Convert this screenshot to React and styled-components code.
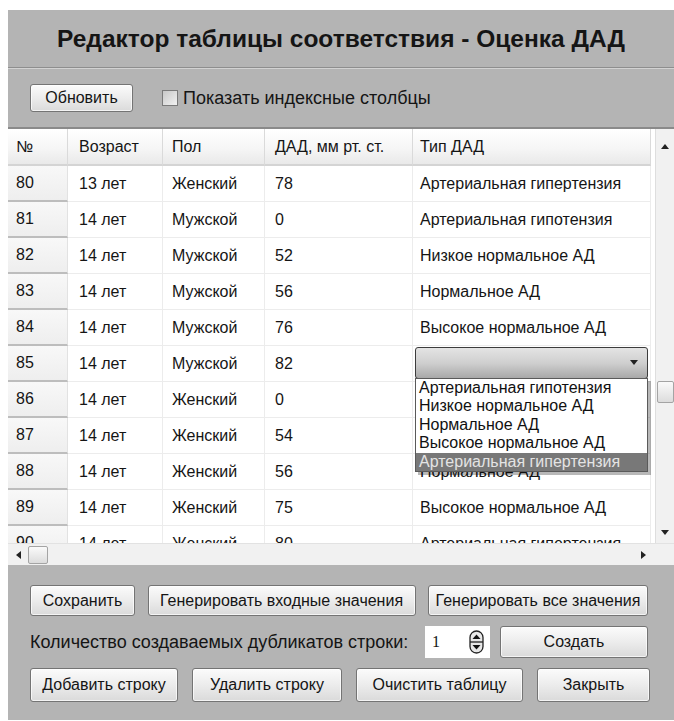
import React from "react";
import styled, { createGlobalStyle } from "styled-components";

const GlobalStyle = createGlobalStyle`
  body {
    margin: 0;
    background: #fff;
    font-family: "Liberation Sans", Arial, sans-serif;
    color: #151515;
  }
`;

const Window = styled.div`
  margin: 10px 0 0 8px;
  width: 666px;
  background: #b4b4b4;
`;

const TitleBar = styled.h1`
  margin: 0;
  height: 57px;
  display: flex;
  align-items: center;
  justify-content: center;
  font-size: 24.5px;
  font-weight: bold;
  border-bottom: 1px solid #8e8e8e;
  box-shadow: 0 1px 0 #d2d2d2;
`;

const Toolbar = styled.div`
  height: 58px;
  display: flex;
  align-items: center;
  padding-left: 22px;
  gap: 29px;
  border-bottom: 2px solid #8a8a8a;
  margin-top: 1px;
`;

const Button = styled.button`
  width: ${(p) => p.$w}px;
  height: ${(p) => p.$h || 31}px;
  padding: 0;
  border: 1px solid #747474;
  border-radius: 3px;
  background: linear-gradient(#fbfbfb, #ececec 50%, #dadada);
  box-shadow: inset 0 0 0 1px rgba(255, 255, 255, 0.7);
  font-family: inherit;
  font-size: 16px;
  color: #151515;
`;

const CheckLabel = styled.label`
  display: flex;
  align-items: center;
  gap: 5px;
  font-size: 18px;
`;

const CheckBox = styled.span`
  width: 14px;
  height: 14px;
  border: 1px solid #7a7a7a;
  background: linear-gradient(135deg, #c8c8c8, #f2f2f2);
`;

const TableFrame = styled.div`
  display: grid;
  grid-template-columns: 647px 19px;
  grid-template-rows: 414px 22px;
  background: #fff;
`;

const Viewport = styled.div`
  overflow: hidden;
`;

const Grid = styled.div`
  display: grid;
  grid-template-columns: 60px 95px 102px 148px 238px;
  grid-template-rows: 37px;
  grid-auto-rows: 36px;
  font-size: 16px;
`;

const Cell = styled.div`
  position: relative;
  display: flex;
  align-items: center;
  padding-left: ${(p) => p.$pad ?? 9}px;
  border-right: 1px solid #ececec;
  border-bottom: 1px solid #ececec;
  white-space: nowrap;
`;

const HeadCell = styled(Cell)`
  background: linear-gradient(#ffffff, #f6f6f6 55%, #e9e9e9);
  border-right-color: #dadada;
  border-bottom: 2px solid #d4d4d4;
`;

const IndexCell = styled(Cell)`
  background: linear-gradient(#f8f8f8, #eeeeee);
  border-bottom: 2px solid #bdbdbd;
  border-right-color: #e2e2e2;
`;

const Combo = styled.div`
  position: relative;
  flex: 1;
  height: 30px;
  margin: -2px 2px 0 -5px;
  border: 1px solid #3c3c3c;
  border-radius: 3px;
  background: linear-gradient(#e4e4e4, #cfcfcf 50%, #a9a9a9);
  display: flex;
  align-items: center;
  justify-content: flex-end;
  padding-right: 9px;
`;

const Popup = styled.ul`
  position: absolute;
  top: 100%;
  left: -1px;
  right: -1px;
  z-index: 5;
  margin: 0;
  padding: 0;
  list-style: none;
  background: #fff;
  border: 1px solid #5a5a5a;
  box-shadow: 3px 3px 0 rgba(0, 0, 0, 0.28);
`;

const Option = styled.li`
  height: 18.5px;
  line-height: 17px;
  padding-left: 3px;
  font-size: 16px;
  background: ${(p) => (p.$active ? "#787878" : "transparent")};
  color: ${(p) => (p.$active ? "#e4e4e4" : "#111")};
`;

const VScroll = styled.div`
  display: flex;
  flex-direction: column;
  background: #f1f1f1;
  border-left: 1px solid #dedede;
`;

const HScroll = styled.div`
  display: flex;
  align-items: center;
  background: #f1f1f1;
  border-top: 1px solid #e2e2e2;
  padding: 0 9px 0 8px;
`;

const Corner = styled.div`
  background: #f1f1f1;
  border-top: 1px solid #e2e2e2;
`;

const ArrowBox = styled.div`
  display: flex;
  align-items: center;
  justify-content: center;
  height: ${(p) => p.$h || 34}px;
`;

const Track = styled.div`
  flex: 1;
`;

const Thumb = styled.div`
  width: ${(p) => (p.$horizontal ? "18px" : "auto")};
  height: ${(p) => (p.$horizontal ? "16px" : "20px")};
  margin: ${(p) => (p.$horizontal ? "0 0 0 7px" : "0 0 0 1px")};
  border: 1px solid #a4a4a4;
  border-radius: 2px;
  background: linear-gradient(#fafafa, #dcdcdc);
`;

const Footer = styled.div`
  display: flex;
  flex-direction: column;
  gap: 10px;
  padding: 20px 18px 18px 22px;
`;

const ButtonRow = styled.div`
  display: flex;
  align-items: center;
  justify-content: space-between;
  width: ${(p) => p.$w}px;
`;

const CountLabel = styled.span`
  flex: 1;
  font-size: 18px;
`;

const SpinBox = styled.div`
  width: 65px;
  height: 32px;
  margin-right: 10px;
  background: #fff;
  display: flex;
  align-items: center;
  justify-content: space-between;
  padding: 0 6px 0 7px;
  box-sizing: border-box;
  font-family: "Liberation Serif", serif;
  font-size: 16px;
`;

const Arrow = ({ dir }) => {
  const d = {
    up: "M0 5 L4 0 L8 5 Z",
    down: "M0 0 L8 0 L4 5 Z",
    left: "M5 0 L5 8 L0 4 Z",
    right: "M0 0 L5 4 L0 8 Z",
  }[dir];
  const horiz = dir === "left" || dir === "right";
  return (
    <svg width={horiz ? 5 : 8} height={horiz ? 8 : 5} viewBox={horiz ? "0 0 5 8" : "0 0 8 5"}>
      <path d={d} fill="#222" />
    </svg>
  );
};

const SpinArrows = () => (
  <svg width="15" height="24" viewBox="0 0 15 24">
    <rect x="1" y="1" width="13" height="22" rx="6.5" fill="#e8e8e8" stroke="#222" strokeWidth="1.3" />
    <line x1="1" y1="12" x2="14" y2="12" stroke="#222" strokeWidth="1.3" />
    <path d="M3.5 9 L7.5 4.5 L11.5 9 Z" fill="#111" />
    <path d="M3.5 15 L11.5 15 L7.5 19.5 Z" fill="#111" />
  </svg>
);

const columns = ["№", "Возраст", "Пол", "ДАД, мм рт. ст.", "Тип ДАД"];

const rows = [
  [80, "13 лет", "Женский", "78", "Артериальная гипертензия"],
  [81, "14 лет", "Мужской", "0", "Артериальная гипотензия"],
  [82, "14 лет", "Мужской", "52", "Низкое нормальное АД"],
  [83, "14 лет", "Мужской", "56", "Нормальное АД"],
  [84, "14 лет", "Мужской", "76", "Высокое нормальное АД"],
  [85, "14 лет", "Мужской", "82", null],
  [86, "14 лет", "Женский", "0", "Артериальная гипотензия"],
  [87, "14 лет", "Женский", "54", "Низкое нормальное АД"],
  [88, "14 лет", "Женский", "56", "Нормальное АД"],
  [89, "14 лет", "Женский", "75", "Высокое нормальное АД"],
  [90, "14 лет", "Женский", "80", "Артериальная гипертензия"],
];

const types = [
  "Артериальная гипотензия",
  "Низкое нормальное АД",
  "Нормальное АД",
  "Высокое нормальное АД",
  "Артериальная гипертензия",
];

const padding = [8, 11, 9, 10, 7];

export default function App() {
  // thumb offset follows the first visible row
  const totalRows = 127;
  const firstRow = 80;
  const trackLen = 323;
  const thumbTop = Math.round((trackLen * (firstRow - 1)) / (totalRows - 10));

  return (
    <>
      <GlobalStyle />
      <Window>
        <TitleBar>Редактор таблицы соответствия - Оценка ДАД</TitleBar>
        <Toolbar>
          <Button $w={103} $h={28}>Обновить</Button>
          <CheckLabel>
            <CheckBox />
            Показать индексные столбцы
          </CheckLabel>
        </Toolbar>

        <TableFrame>
          <Viewport>
            <Grid>
              {columns.map((c, i) => (
                <HeadCell key={c} $pad={padding[i]}>{c}</HeadCell>
              ))}
              {rows.map((r) => (
                <React.Fragment key={r[0]}>
                  <IndexCell $pad={padding[0]}>{r[0]}</IndexCell>
                  <Cell $pad={padding[1]}>{r[1]}</Cell>
                  <Cell $pad={padding[2]}>{r[2]}</Cell>
                  <Cell $pad={padding[3]}>{r[3]}</Cell>
                  <Cell $pad={padding[4]}>
                    {r[4] ?? (
                      <Combo>
                        <Arrow dir="down" />
                        <Popup>
                          {types.map((t, i) => (
                            <Option key={t} $active={i === types.length - 1}>{t}</Option>
                          ))}
                        </Popup>
                      </Combo>
                    )}
                  </Cell>
                </React.Fragment>
              ))}
            </Grid>
          </Viewport>

          <VScroll>
            <ArrowBox><Arrow dir="up" /></ArrowBox>
            <Track>
              <Thumb style={{ marginTop: thumbTop }} />
            </Track>
            <ArrowBox $h={22}><Arrow dir="down" /></ArrowBox>
          </VScroll>

          <HScroll>
            <Arrow dir="left" />
            <Thumb $horizontal />
            <Track />
            <Arrow dir="right" />
          </HScroll>
          <Corner />
        </TableFrame>

        <Footer>
          <ButtonRow $w={618}>
            <Button $w={105}>Сохранить</Button>
            <Button $w={268}>Генерировать входные значения</Button>
            <Button $w={220}>Генерировать все значения</Button>
          </ButtonRow>
          <ButtonRow $w={618}>
            <CountLabel>Количество создаваемых дубликатов строки:</CountLabel>
            <SpinBox>
              1
              <SpinArrows />
            </SpinBox>
            <Button $w={148} $h={32}>Создать</Button>
          </ButtonRow>
          <ButtonRow $w={620}>
            <Button $w={148} $h={34}>Добавить строку</Button>
            <Button $w={150} $h={34}>Удалить строку</Button>
            <Button $w={167} $h={34}>Очистить таблицу</Button>
            <Button $w={113} $h={34}>Закрыть</Button>
          </ButtonRow>
        </Footer>
      </Window>
    </>
  );
}
